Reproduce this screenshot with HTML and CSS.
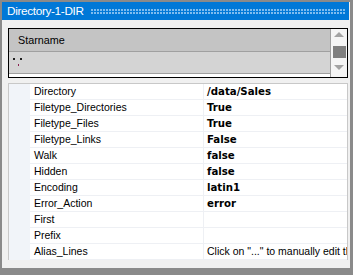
FILE: index.html
```html
<!DOCTYPE html>
<html>
<head>
<meta charset="utf-8">
<link rel="stylesheet" href="styles.css">
</head>
<body>
<div class="frame">
  <div class="title">
    <span class="title-text">Directory-1-DIR</span>
    <span class="title-dots"></span>
  </div>
  <div class="content">
    <div class="gridbox">
      <div class="grid-main">
        <div class="grid-header">Starname</div>
        <div class="grid-row">
          <span class="marks"><i class="d"></i><i class="d"></i><i class="p"></i></span>
        </div>
        <div class="grid-rest"></div>
      </div>
      <div class="scrollbar">
        <svg class="arrow" width="16" height="10" viewBox="0 0 16 10"><polygon points="3,7 8,2 13,7" fill="#a3a3a3"/></svg>
        <div class="thumb"></div>
        <svg class="arrow" width="16" height="10" viewBox="0 0 16 10"><polygon points="3,3 8,8 13,3" fill="#a3a3a3"/></svg>
      </div>
    </div>
    <div class="props">
      <div class="prow"><span class="pm"></span><span class="pn">Directory</span><span class="pv b">/data/Sales</span></div>
      <div class="prow"><span class="pm"></span><span class="pn">Filetype_Directories</span><span class="pv b">True</span></div>
      <div class="prow"><span class="pm"></span><span class="pn">Filetype_Files</span><span class="pv b">True</span></div>
      <div class="prow"><span class="pm"></span><span class="pn">Filetype_Links</span><span class="pv b">False</span></div>
      <div class="prow"><span class="pm"></span><span class="pn">Walk</span><span class="pv b">false</span></div>
      <div class="prow"><span class="pm"></span><span class="pn">Hidden</span><span class="pv b">false</span></div>
      <div class="prow"><span class="pm"></span><span class="pn">Encoding</span><span class="pv b">latin1</span></div>
      <div class="prow"><span class="pm"></span><span class="pn">Error_Action</span><span class="pv b">error</span></div>
      <div class="prow"><span class="pm"></span><span class="pn">First</span><span class="pv"></span></div>
      <div class="prow"><span class="pm"></span><span class="pn">Prefix</span><span class="pv"></span></div>
      <div class="prow"><span class="pm"></span><span class="pn">Alias_Lines</span><span class="pv">Click on "..." to manually edit the alias lines</span></div>
    </div>
  </div>
</div>
</body>
</html>
```
FILE: styles.css
```css
html, body {
  margin: 0;
  padding: 0;
  background: #8a8a8a;
}
.frame {
  width: 353px;
  height: 275px;
  box-sizing: border-box;
  border-style: solid;
  border-color: #8a8a8a;
  border-width: 2px 3px 7px 2px;
  background: #f0f0f0;
  overflow: hidden;
  font-family: "Liberation Sans", Arial, sans-serif;
  display: flex;
  flex-direction: column;
}
.title {
  height: 18px;
  flex: none;
  background: #0078d7;
  display: flex;
  align-items: center;
  padding-left: 5px;
  padding-right: 4px;
  box-shadow: inset -1px 0 0 #f0f0f0;
}
.title-text {
  color: #ffffff;
  font-size: 11.8px;
  letter-spacing: -0.35px;
  line-height: 18px;
}
.title-dots {
  flex: 1;
  height: 6px;
  margin-left: 7px;
  margin-top: 1px;
  background-image: radial-gradient(circle at 1px 1px, #7dbcef 0.9px, transparent 1.1px);
  background-size: 3px 3px;
}
.content {
  flex: 1;
  padding: 8px 1px 0 6px;
  display: flex;
  flex-direction: column;
  gap: 5px;
  border-left: 1px solid #8a8a8a;
  margin-left: -1px;
}
.gridbox {
  height: 50px;
  box-sizing: border-box;
  border: 1px solid #000000;
  display: flex;
  background: #ffffff;
  width: 340px;
}
.grid-main {
  flex: 1;
  display: flex;
  flex-direction: column;
  border-right: 1px solid #a0a0a0;
}
.grid-header {
  height: 22px;
  background: #c4c4c4;
  border-bottom: 1px solid #a0a0a0;
  font-size: 10.8px;
  line-height: 23px;
  padding-left: 9px;
  color: #000;
}
.grid-row {
  height: 21px;
  background: #d4d4d4;
  border-bottom: 1px solid #a0a0a0;
  display: flex;
  align-items: flex-start;
}
.marks {
  position: relative;
  width: 20px;
  height: 20px;
  margin-left: 4px;
}
.marks i {
  position: absolute;
  display: block;
}
.marks .d {
  width: 2px;
  height: 2px;
  background: #202020;
  top: 6px;
}
.marks .d:nth-child(1) { left: 0; }
.marks .d:nth-child(2) { left: 7px; }
.marks .p {
  width: 1px;
  height: 2px;
  background: #8a2050;
  left: 5px;
  top: 12px;
}
.grid-rest {
  flex: 1;
  background: #ffffff;
}
.scrollbar {
  width: 16px;
  background: #f5f5f5;
  display: flex;
  flex-direction: column;
  align-items: center;
  padding-top: 1px;
}
.arrow {
  display: block;
  flex: none;
}
.thumb {
  width: 13px;
  height: 12px;
  background: #7f7f7f;
  margin: 6px 0 4px 0;
}
.props {
  width: 340px;
  box-sizing: border-box;
  background: #ffffff;
  border: 1px solid #c8c8c8;
  border-bottom: none;
  display: flex;
  flex-direction: column;
  padding-bottom: 0;
}
.prow {
  height: 16px;
  display: flex;
  font-size: 10.5px;
  line-height: 15px;
  color: #000;
}
.pm {
  width: 21px;
  flex: none;
  background: #f1f4f9;
}
.pn {
  width: 169px;
  flex: none;
  padding-left: 4px;
  border-bottom: 1px solid #eef0f4;
  border-right: 1px solid #eef0f4;
  white-space: nowrap;
  overflow: hidden;
}
.pv {
  flex: 1;
  padding-left: 3px;
  border-bottom: 1px solid #eef0f4;
  white-space: nowrap;
  overflow: hidden;
}
.pv.b {
  font-family: "DejaVu Sans", sans-serif;
  font-weight: bold;
  font-size: 10.2px;
}
```
